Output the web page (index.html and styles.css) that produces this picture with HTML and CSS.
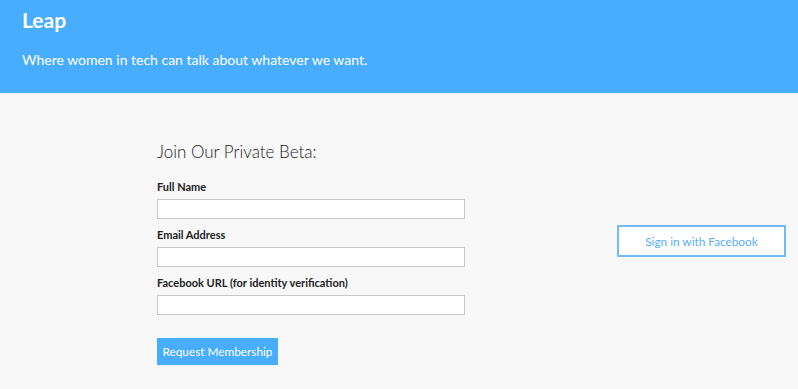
FILE: index.html
```html
<!DOCTYPE html>
<html lang="en">
<head>
  <meta charset="UTF-8">
  <title>Leap</title>
  <link rel="stylesheet" href="styles.css">
</head>
<body>
  <header class="hero">
    <h1>Leap</h1>
    <p>Where women in tech can talk about whatever we want.</p>
  </header>

  <main class="main">
    <form class="signup">
      <h2>Join Our Private Beta:</h2>

      <div class="field"><label for="name">Full Name</label><input id="name" type="text"></div>
      <div class="field"><label for="email">Email Address</label><input id="email" type="text"></div>
      <div class="field"><label for="fb">Facebook URL (for identity verification)</label><input id="fb" type="text"></div>

      <button type="button" class="btn-primary">Request Membership</button>
    </form>

    <aside class="social">
      <button type="button" class="btn-outline">Sign in with Facebook</button>
    </aside>
  </main>
</body>
</html>
```

FILE: styles.css
```css
body { margin: 0; background-color: #f8f8f8; color: #222; font-family: Lato, "Open Sans", sans-serif; }
.hero { background-color: #48adff; color: #fff; padding: 8px 22px 24px; height: 61px; }
.hero h1 { margin: 0; font-size: 21px; line-height: 24px; font-weight: 700; }
.hero p { margin: 19px 0 0; font-size: 14px; line-height: 18px; }
.main { display: flex; align-items: flex-start; padding: 49px 0 0 157px; }
.signup { width: 308px; }
.signup h2 { margin: 0 0 18px; font-size: 17px; line-height: 20px; font-weight: 300; color: #222; }
.field { margin-bottom: 9px; }
.field label { display: block; font-size: 11px; line-height: 14px; font-weight: 700; margin-bottom: 5px; }
.field input { display: block; box-sizing: border-box; width: 308px; height: 20px; border: 1px solid #c8c8c8; background: #fff; margin: 0; }
.btn-primary { margin-top: 14px; width: 121px; height: 27px; border: 0; background-color: #48adff; color: #fff; font-family: inherit; font-size: 11.8px; padding: 0; white-space: nowrap; }
.social { margin: 83px 0 0 152px; }
.btn-outline { width: 169px; height: 32px; border: 2px solid #72bafc; background: #fff; color: #5aaef8; font-family: inherit; font-size: 11.8px; padding: 0; white-space: nowrap; }
```
